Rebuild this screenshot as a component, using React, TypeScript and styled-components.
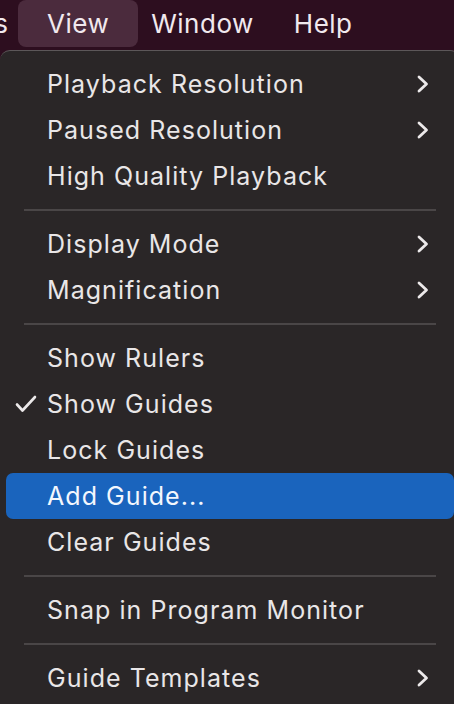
import styled, { createGlobalStyle } from "styled-components"

const Global = createGlobalStyle`
  html, body {
    margin: 0;
    padding: 0;
    background: #2a2627;
    overflow: hidden;
  }
  body {
    font-family: Inter, "Noto Sans", sans-serif;
    -webkit-font-smoothing: antialiased;
  }
`

const Page = styled.div`
  width: 454px;
  height: 704px;
  display: flex;
  flex-direction: column;
  background: #2d0e1f;
  overflow: hidden;
`

const MenuBar = styled.div`
  height: 49px;
  flex-shrink: 0;
  display: flex;
  align-items: flex-start;
  background: #2d0e1f;
  color: #f1e9ee;
  font-size: 26px;
  letter-spacing: 0.5px;
`

const BarItem = styled.div<{ $active?: boolean; $pad?: number }>`
  height: 47px;
  display: flex;
  align-items: center;
  padding: 0 ${(p) => p.$pad ?? 20}px;
  border-radius: 8px;
  background: ${(p) => (p.$active ? "#4b2b3d" : "transparent")};
`

const Cut = styled.div`
  height: 47px;
  width: 8px;
  margin-right: 10px;
  display: flex;
  align-items: center;
  justify-content: flex-end;
  overflow: hidden;
  letter-spacing: 0;
`

const Menu = styled.div`
  flex: 1;
  margin: 1px -6px 0 0;
  background: #2a2627;
  border-top: 1px solid #5c5759;
  border-radius: 10px 10px 0 0;
  padding: 10px 6px 0 6px;
  display: flex;
  flex-direction: column;
`

const Item = styled.div<{ $selected?: boolean }>`
  height: 46px;
  display: flex;
  align-items: center;
  position: relative;
  padding: 0 24px 0 41px;
  border-radius: 7px;
  font-size: 25px;
  letter-spacing: 1.05px;
  color: ${(p) => (p.$selected ? "#f3f7fd" : "#e9e6e7")};
  background: ${(p) => (p.$selected ? "#1a64bd" : "transparent")};
`

const Label = styled.span`
  flex: 1;
`

const Check = styled.svg`
  position: absolute;
  left: 9px;
  top: 14px;
`

const Separator = styled.div`
  height: 22px;
  display: flex;
  align-items: center;
  padding: 0 18px;
  &::after {
    content: "";
    flex: 1;
    height: 2px;
    background: #4a4647;
  }
`

const Chevron = () => (
  <svg width="14" height="20" viewBox="0 0 14 20">
    <path d="M3 3 L10.5 10 L3 17" fill="none" stroke="#ece9ea" strokeWidth="2.8" strokeLinecap="round" strokeLinejoin="round" />
  </svg>
)

type Entry = { label: string; sub?: boolean; checked?: boolean; selected?: boolean } | "sep"

const entries: Entry[] = [
  { label: "Playback Resolution", sub: true },
  { label: "Paused Resolution", sub: true },
  { label: "High Quality Playback" },
  "sep",
  { label: "Display Mode", sub: true },
  { label: "Magnification", sub: true },
  "sep",
  { label: "Show Rulers" },
  { label: "Show Guides", checked: true },
  { label: "Lock Guides" },
  { label: "Add Guide...", selected: true },
  { label: "Clear Guides" },
  "sep",
  { label: "Snap in Program Monitor" },
  "sep",
  { label: "Guide Templates", sub: true },
]

export default function App() {
  return (
    <Page>
      <Global />
      <MenuBar>
        <Cut>
          <span>s</span>
        </Cut>
        <BarItem $active $pad={29}>View</BarItem>
        <BarItem $pad={13}>Window</BarItem>
        <BarItem $pad={27}>Help</BarItem>
      </MenuBar>
      <Menu>
        {entries.map((e, i) =>
          e === "sep" ? (
            <Separator key={i} />
          ) : (
            <Item key={i} $selected={e.selected}>
              {e.checked && (
                <Check width="22" height="18" viewBox="0 0 22 18">
                  <path d="M2 9.5 L7.5 15.5 L20 2" fill="none" stroke="#ece9ea" strokeWidth="2.6" strokeLinecap="round" strokeLinejoin="round" />
                </Check>
              )}
              <Label>{e.label}</Label>
              {e.sub && <Chevron />}
            </Item>
          )
        )}
      </Menu>
    </Page>
  )
}
